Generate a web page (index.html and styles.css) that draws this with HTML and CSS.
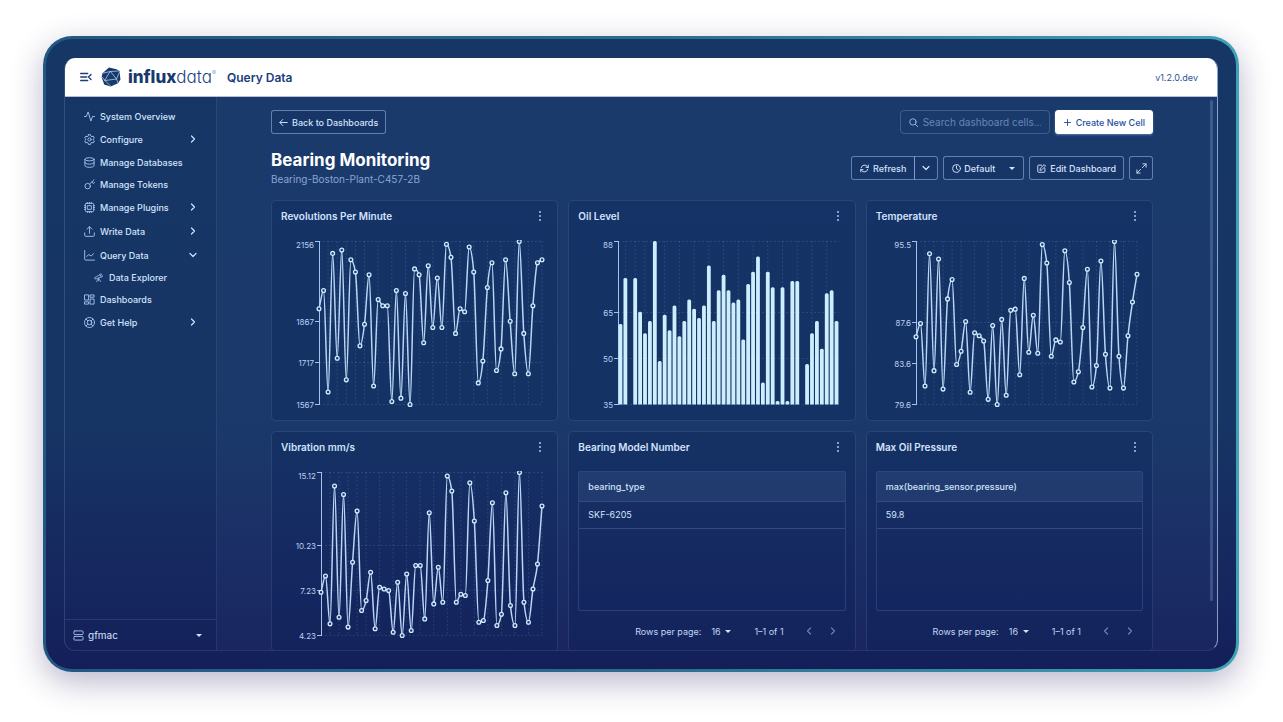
FILE: index.html
```html
<!DOCTYPE html>
<html lang="en">
<head>
    <meta charset="UTF-8">
    <meta name="viewport" content="width=device-width, initial-scale=1.0">
    <title>Query Data</title>
    <link rel="stylesheet" href="styles.css">
</head>
<body>
    <div class="frame">
        <div class="app">
            <header class="topbar">
                <button class="icon-btn menu-btn" type="button" aria-label="Collapse menu">
                    <svg width="12" height="10" viewBox="0 0 12 10"><path d="M.7 1.500h7M.7 5h6M.7 8.500h7M11 2.500 8.500 5 11 7.500"/></svg>
                </button>
                <a class="logo" href="#">
                    <svg class="logo-mark" width="20" height="20" viewBox="0 0 20 20">
                        <path class="logo-shape" d="M8 .6 15.5 2.2 18.6 4 19.4 12.5 17 16.3 9.6 19.4 3.2 17.6 .7 10.6 1.4 6.2z"/>
                        <path class="logo-lines" d="M9.500 4.500 15.5 12 4 13.500zM9.500 4.500 1.4 6.2M9.500 4.500 17.500 4M15.500 12 18.6 5M15.5 12 17 16M4 13.500 9.6 19M4 13.500 1 10"/>
                    </svg>
                    <span class="logo-text"><b>influx</b>data<sup>®</sup></span>
                </a>
                <h2 class="page-name">Query Data</h2>
                <span class="version">v1.2.0.dev</span>
            </header>

            <div class="layout">
                <aside class="sidebar">
                    <nav class="nav">
                        <a class="nav-item" href="#">
                            <svg class="icon" viewBox="0 0 24 24"><path d="M1 12h4l4-10 6 20 3.500-10H23"/></svg>
                            System Overview
                        </a>
                        <a class="nav-item expandable" href="#">
                            <svg class="icon" viewBox="0 0 24 24"><path d="M9.700 1.500h4.600l.8 3.200 2 1.200 3.200-1 2.300 4-2.400 2.200v2l2.400 2.200-2.300 4-3.200-1-2 1.200-.8 3.200H9.700l-.8-3.200-2-1.200-3.200 1-2.300-4 2.400-2.200v-2L1.400 8.900l2.300-4 3.200 1 2-1.200z"/><circle cx="12" cy="12" r="3.500"/></svg>
                            Configure
                            <svg class="chevron" viewBox="0 0 8 8"><path d="m2.500 1 3 3-3 3"/></svg>
                        </a>
                        <a class="nav-item" href="#">
                            <svg class="icon" viewBox="0 0 24 24"><ellipse cx="12" cy="5" rx="10" ry="3.500"/><path d="M2 5v14c0 2 4.500 3.500 10 3.500S22 21 22 19V5M2 12c0 2 4.500 3.500 10 3.500S22 14 22 12"/></svg>
                            Manage Databases
                        </a>
                        <a class="nav-item" href="#">
                            <svg class="icon" viewBox="0 0 24 24"><circle cx="8" cy="15.500" r="6"/><path d="M12.500 11 22 1.500M17 6.500l3.500 3.500L23 7"/></svg>
                            Manage Tokens
                        </a>
                        <a class="nav-item expandable" href="#">
                            <svg class="icon" viewBox="0 0 24 24"><rect x="3" y="3" width="18" height="18" rx="2"/><rect x="8" y="8" width="8" height="8"/><path d="M8 3V1M12 3V1M16 3V1M8 23v-2M12 23v-2M16 23v-2M3 8H1M3 12H1M3 16H1M23 8h-2M23 12h-2M23 16h-2"/></svg>
                            Manage Plugins
                            <svg class="chevron" viewBox="0 0 8 8"><path d="m2.500 1 3 3-3 3"/></svg>
                        </a>
                        <a class="nav-item expandable" href="#">
                            <svg class="icon" viewBox="0 0 24 24"><path d="M1.500 15v5.500a2 2 0 0 0 2 2h17a2 2 0 0 0 2-2V15M12 16V2M6.500 7 12 1.500 17.500 7"/></svg>
                            Write Data
                            <svg class="chevron" viewBox="0 0 8 8"><path d="m2.500 1 3 3-3 3"/></svg>
                        </a>
                        <a class="nav-item expandable" href="#">
                            <svg class="icon" viewBox="0 0 24 24"><path d="M1.500 1v19a2 2 0 0 0 2 2H23M6 14l4.500-4 5 3L21 8"/></svg>
                            Query Data
                            <svg class="chevron" viewBox="0 0 8 8"><path d="m1 2.500 3 3 3-3"/></svg>
                        </a>
                        <a class="nav-item sub-item" href="#">
                            <svg class="icon icon-sm" viewBox="0 0 24 24"><path d="m2 12 14-7 3 6-15 5zM15 4l4-2 4 7-4 2M12 14l-5 9M12 14l6 9M12 14v7"/></svg>
                            Data Explorer
                        </a>
                        <a class="nav-item" href="#">
                            <svg class="icon" viewBox="0 0 24 24"><path d="M2 2h8v11H2zM14 2h8v5h-8zM14 11h8v11h-8zM2 17h8v5H2z"/></svg>
                            Dashboards
                        </a>
                        <a class="nav-item expandable" href="#">
                            <svg class="icon" viewBox="0 0 24 24"><circle cx="12" cy="12" r="11"/><circle cx="12" cy="12" r="5"/><path d="m4.500 4.500 4 4M15.500 8.500l4-4M15.500 15.500l4 4M8.500 15.500l-4 4"/></svg>
                            Get Help
                            <svg class="chevron" viewBox="0 0 8 8"><path d="m2.500 1 3 3-3 3"/></svg>
                        </a>
                    </nav>
                    <div class="server">
                        <svg class="icon" viewBox="0 0 24 24"><rect x="2" y="2" width="20" height="8" rx="2"/><rect x="2" y="14" width="20" height="8" rx="2"/></svg>
                        <div class="select-wrap">
                            <select class="server-select" aria-label="Server">
                                <option>gfmac</option>
                            </select>
                            <svg class="caret" viewBox="0 0 6 3"><path d="M0 0h6L3 3z"/></svg>
                        </div>
                    </div>
                </aside>

                <main class="content">
                    <div class="actions">
                        <button class="btn" type="button">
                            <svg class="btn-icon" viewBox="0 0 24 24"><path d="M22 12H3M10 4l-8 8 8 8"/></svg>
                            Back to Dashboards
                        </button>
                        <div class="actions-right">
                            <label class="search">
                                <svg class="btn-icon" viewBox="0 0 24 24"><circle cx="10.500" cy="10.500" r="8.500"/><path d="m17 17 6 6"/></svg>
                                <input type="text" placeholder="Search dashboard cells..." aria-label="Search dashboard cells">
                            </label>
                            <button class="btn btn-primary" type="button">
                                <svg class="btn-icon" viewBox="0 0 24 24"><path d="M12 4v16M4 12h16"/></svg>
                                Create New Cell
                            </button>
                        </div>
                    </div>

                    <div class="heading">
                        <div>
                            <h1>Bearing Monitoring</h1>
                            <p class="subtitle">Bearing-Boston-Plant-C457-2B</p>
                        </div>
                        <div class="toolbar">
                            <div class="btn-group">
                                <button class="btn" type="button">
                                    <svg class="btn-icon" viewBox="0 0 24 24"><path d="M3 10a9.500 9.500 0 0 1 17-3l2 2M22 3v6h-6M21 14a9.500 9.500 0 0 1-17 3l-2-2M2 21v-6h6"/></svg>
                                    Refresh
                                </button>
                                <button class="btn btn-square" type="button" aria-label="Refresh options">
                                    <svg class="chevron" viewBox="0 0 8 8"><path d="m1 2.500 3 3 3-3"/></svg>
                                </button>
                            </div>
                            <div class="btn time-range">
                                <svg class="btn-icon" viewBox="0 0 24 24"><circle cx="12" cy="12" r="10.500"/><path d="M12 5v7.500l4.500 3"/></svg>
                                <div class="select-wrap">
                                    <select aria-label="Time range">
                                        <option>Default</option>
                                    </select>
                                    <svg class="caret" viewBox="0 0 6 3"><path d="M0 0h6L3 3z"/></svg>
                                </div>
                            </div>
                            <button class="btn" type="button">
                                <svg class="btn-icon" viewBox="0 0 24 24"><path d="M12 3H4a2 2 0 0 0-2 2v15a2 2 0 0 0 2 2h15a2 2 0 0 0 2-2v-8M8 16l1-5 10-9.500 4 4L13 15z"/></svg>
                                Edit Dashboard
                            </button>
                            <button class="btn btn-square btn-expand" type="button" aria-label="Full screen">
                                <svg class="btn-icon" viewBox="0 0 24 24"><path d="M15 2h7v7M22 2l-8 8M9 22H2v-7M2 22l8-8"/></svg>
                            </button>
                        </div>
                    </div>

                    <div class="cells">
                        <section class="cell">
                            <div class="cell-head">
                                <h3>Revolutions Per Minute</h3>
                                <button class="icon-btn dots" type="button" aria-label="Cell menu"><i></i><i></i><i></i></button>
                            </div>
                            <svg class="chart" data-chart="rpm"></svg>
                        </section>
                        <section class="cell">
                            <div class="cell-head">
                                <h3>Oil Level</h3>
                                <button class="icon-btn dots" type="button" aria-label="Cell menu"><i></i><i></i><i></i></button>
                            </div>
                            <svg class="chart" data-chart="oil"></svg>
                        </section>
                        <section class="cell">
                            <div class="cell-head">
                                <h3>Temperature</h3>
                                <button class="icon-btn dots" type="button" aria-label="Cell menu"><i></i><i></i><i></i></button>
                            </div>
                            <svg class="chart" data-chart="temperature"></svg>
                        </section>
                        <section class="cell">
                            <div class="cell-head">
                                <h3>Vibration mm/s</h3>
                                <button class="icon-btn dots" type="button" aria-label="Cell menu"><i></i><i></i><i></i></button>
                            </div>
                            <svg class="chart" data-chart="vibration"></svg>
                        </section>
                        <section class="cell">
                            <div class="cell-head">
                                <h3>Bearing Model Number</h3>
                                <button class="icon-btn dots" type="button" aria-label="Cell menu"><i></i><i></i><i></i></button>
                            </div>
                            <div class="table-box">
                                <table>
                                    <thead><tr><th>bearing_type</th></tr></thead>
                                    <tbody><tr><td>SKF-6205</td></tr></tbody>
                                </table>
                            </div>
                            <div class="pager">
                                <label for="rows1">Rows per page:</label>
                                <div class="select-wrap rows">
                                    <select id="rows1"><option>16</option></select>
                                    <svg class="caret" viewBox="0 0 6 3"><path d="M0 0h6L3 3z"/></svg>
                                </div>
                                <span class="range">1–1 of 1</span>
                                <button class="icon-btn" type="button" disabled aria-label="Previous page"><svg class="chevron" viewBox="0 0 8 8"><path d="m5.500 1-3 3 3 3"/></svg></button>
                                <button class="icon-btn" type="button" disabled aria-label="Next page"><svg class="chevron" viewBox="0 0 8 8"><path d="m2.500 1 3 3-3 3"/></svg></button>
                            </div>
                        </section>
                        <section class="cell">
                            <div class="cell-head">
                                <h3>Max Oil Pressure</h3>
                                <button class="icon-btn dots" type="button" aria-label="Cell menu"><i></i><i></i><i></i></button>
                            </div>
                            <div class="table-box">
                                <table>
                                    <thead><tr><th>max(bearing_sensor.pressure)</th></tr></thead>
                                    <tbody><tr><td>59.8</td></tr></tbody>
                                </table>
                            </div>
                            <div class="pager">
                                <label for="rows2">Rows per page:</label>
                                <div class="select-wrap rows">
                                    <select id="rows2"><option>16</option></select>
                                    <svg class="caret" viewBox="0 0 6 3"><path d="M0 0h6L3 3z"/></svg>
                                </div>
                                <span class="range">1–1 of 1</span>
                                <button class="icon-btn" type="button" disabled aria-label="Previous page"><svg class="chevron" viewBox="0 0 8 8"><path d="m5.500 1-3 3 3 3"/></svg></button>
                                <button class="icon-btn" type="button" disabled aria-label="Next page"><svg class="chevron" viewBox="0 0 8 8"><path d="m2.500 1 3 3-3 3"/></svg></button>
                            </div>
                        </section>
                    </div>
                    <div class="scroll-thumb"></div>
                </main>
            </div>
        </div>
    </div>

    <script src="charts.js"></script>
</body>
</html>
```

FILE: styles.css
```css
* {
    box-sizing: border-box;
}

body {
    display: flex;
    height: 100vh;
    margin: 0;
    padding: 36px 44px 50px 43px;
    overflow: hidden;
    background: #fff;
    color: #d3e3fc;
    font-family: Inter, "Liberation Sans", sans-serif;
    font-size: 9px;
    font-weight: 500;
}

h1, h2, h3, p {
    margin: 0;
}

a {
    color: inherit;
    text-decoration: none;
}

button, select, input {
    font: inherit;
    color: inherit;
}

svg {
    flex: none;
    fill: none;
    stroke: currentColor;
    stroke-linecap: round;
    stroke-linejoin: round;
}

.frame {
    display: flex;
    flex: 1;
    padding: 19px 18px 18px;
    border: 3px solid transparent;
    border-radius: 29px;
    background:
        linear-gradient(180deg, #163666 0%, #163565 60%, #16285f 84%, #141f59 100%) padding-box,
        linear-gradient(90deg, #235783 0%, #2b6c8e 50%, #40a2b5 100%) border-box;
    box-shadow: 0 10px 32px rgba(38, 28, 92, 0.32);
}

.app {
    display: flex;
    flex: 1;
    flex-direction: column;
    min-width: 0;
    overflow: hidden;
    border: 1px solid rgba(150, 180, 230, 0.16);
    border-top: 0;
    border-left-color: rgba(150, 180, 230, 0.2);
    border-right-color: rgba(190, 210, 245, 0.7);
    border-radius: 11px;
}

.topbar {
    display: flex;
    align-items: center;
    height: 39px;
    flex: none;
    padding: 0 19px 0 15px;
    border-bottom: 1px solid #b5c0d3;
    background: #fff;
    color: #1b3d7c;
}

.icon-btn {
    display: flex;
    align-items: center;
    justify-content: center;
    padding: 0;
    border: 0;
    background: none;
}

.menu-btn {
    stroke-width: 1.4;
    margin-right: 9px;
}

.logo {
    display: flex;
    align-items: center;
    gap: 7px;
    margin-right: 11px;
}

.logo-shape {
    fill: #173a6c;
    stroke: none;
}

.logo-lines {
    stroke: #b4cbe8;
    stroke-width: 0.8;
}

.logo-text {
    color: #1c4480;
    font-size: 17px;
    font-weight: 300;
    line-height: 20px;
    font-feature-settings: "cv11";
}

.logo-text b {
    color: #173a6c;
    font-weight: 800;
}

.logo-text sup {
    color: #4f86c8;
    font-size: 6px;
    line-height: 0;
    vertical-align: 8px;
}

.page-name {
    font-size: 12px;
    font-weight: 600;
}

.version {
    margin-left: auto;
    color: #2a5298;
    font-size: 9px;
    font-weight: 400;
}

.layout {
    display: flex;
    flex: 1;
    min-height: 0;
}

.sidebar {
    display: flex;
    flex-direction: column;
    width: 152px;
    flex: none;
    border-right: 1px solid rgba(150, 180, 230, 0.14);
}

.nav {
    flex: 1;
    padding: 8px 19px 0 19px;
}

.nav-item {
    display: flex;
    align-items: center;
    gap: 5px;
    height: 22px;
}

.nav-item.expandable {
    height: 24px;
}

.nav-item.sub-item {
    height: 21px;
    padding-left: 10px;
    gap: 6px;
}

.icon {
    width: 11px;
    height: 11px;
    color: #a9c4f0;
    stroke-width: 2;
}

.icon-sm {
    width: 9px;
    height: 9px;
}

.chevron {
    width: 8px;
    height: 8px;
    stroke-width: 1.2;
}

.nav-item .chevron {
    margin-left: auto;
}

.server {
    display: flex;
    align-items: center;
    gap: 4px;
    height: 31px;
    padding: 0 14px 0 8px;
    border-top: 1px solid rgba(150, 180, 230, 0.16);
    font-size: 10px;
    font-weight: 400;
}

.select-wrap {
    position: relative;
    flex: 1;
}

.select-wrap select {
    display: block;
    width: 100%;
    padding: 0;
    border: 0;
    outline: 0;
    appearance: none;
    background: none;
}

.caret {
    position: absolute;
    top: 50%;
    right: 0;
    width: 6px;
    height: 3px;
    margin-top: -1px;
    fill: #d3e3fc;
    stroke: none;
    pointer-events: none;
}

.content {
    position: relative;
    flex: 1;
    min-width: 0;
    overflow: hidden;
    padding: 13px 64px 0 54px;
    background: rgba(160, 190, 255, 0.04);
}

.actions, .heading, .actions-right, .toolbar, .btn-group {
    display: flex;
}

.actions, .heading {
    justify-content: space-between;
}

.actions-right, .toolbar {
    gap: 5px;
}

.btn {
    display: flex;
    align-items: center;
    gap: 4px;
    height: 24px;
    padding: 0 7px;
    border: 1px solid rgba(160, 190, 240, 0.55);
    border-radius: 3px;
    background: rgba(0, 30, 80, 0.14);
    white-space: nowrap;
}

.btn-icon {
    width: 9px;
    height: 9px;
    stroke-width: 2.5;
}

.btn-primary {
    border-color: #fff;
    background: #fff;
    color: #2450a0;
    box-shadow: 0 1px 2px rgba(150, 190, 255, 0.5);
}

.btn-group .btn:first-child {
    border-radius: 3px 0 0 3px;
}

.btn-group .btn:last-child {
    margin-left: -1px;
    border-radius: 0 3px 3px 0;
}

.btn-square {
    justify-content: center;
    width: 24px;
    padding: 0;
}

.btn-group .btn:first-child {
    padding: 0 8px;
}

.btn-expand .btn-icon {
    width: 11px;
    height: 11px;
    stroke-width: 2;
}

.time-range {
    width: 81px;
    gap: 3px;
    padding: 0 8px;
}

.search {
    display: flex;
    align-items: center;
    gap: 5px;
    width: 150px;
    height: 24px;
    padding: 0 8px;
    border: 1px solid rgba(150, 180, 230, 0.3);
    border-radius: 4px;
    color: #9db7e2;
}

.search input {
    width: 100%;
    min-width: 0;
    padding: 0;
    border: 0;
    outline: 0;
    background: none;
    font-size: 10px;
    font-weight: 400;
}

.search input::placeholder {
    color: #6685b8;
}

.heading {
    align-items: center;
    margin: 15px 0 13px;
}

h1 {
    color: #fff;
    font-size: 17px;
    font-weight: 700;
    line-height: 22px;
}

.subtitle {
    color: #8aa5d3;
    font-size: 10px;
    font-weight: 400;
    line-height: 16px;
}

.cells {
    display: grid;
    grid-template-columns: repeat(3, minmax(0, 1fr));
    gap: 10px;
}

.cell {
    display: flex;
    flex-direction: column;
    height: 221px;
    padding: 0 9px;
    border: 1px solid rgba(150, 180, 230, 0.15);
    border-radius: 5px;
    background: rgba(0, 25, 80, 0.2);
}

.cell-head {
    display: flex;
    align-items: center;
    justify-content: space-between;
    height: 29px;
    flex: none;
    margin-bottom: 10px;
}

h3 {
    font-size: 10px;
    font-weight: 600;
}

.dots {
    flex-direction: column;
    gap: 2px;
    width: 16px;
    height: 16px;
}

.dots i {
    width: 2px;
    height: 2px;
    border-radius: 50%;
    background: #a9c4f0;
}

.chart {
    width: 100%;
    height: 178px;
}

.chart .grid {
    stroke: rgba(150, 180, 230, 0.17);
    stroke-dasharray: 2 2;
    stroke-linecap: butt;
}

.chart .axis {
    stroke: #a3c2ef;
    stroke-linecap: butt;
}

.chart text {
    fill: #b9d0f3;
    stroke: none;
    font-size: 8px;
    font-weight: 400;
    text-anchor: end;
}

.chart .line {
    stroke: #b9d6f6;
    stroke-width: 1.5;
}

.chart circle {
    fill: #1b3c70;
    stroke: #d2ecff;
    stroke-width: 1.3;
}

.chart .bar {
    fill: #cdeeff;
    stroke: none;
}

.table-box {
    flex: 1;
    border: 1px solid rgba(150, 180, 230, 0.18);
    border-radius: 2px;
}

table {
    width: 100%;
    border-collapse: collapse;
}

th, td {
    height: 27px;
    padding: 0 9px;
    border-bottom: 1px solid rgba(150, 180, 230, 0.22);
    text-align: left;
    font-weight: 400;
}

th {
    height: 29px;
    background: rgba(150, 180, 230, 0.1);
    font-weight: 500;
}

.pager {
    display: flex;
    align-items: center;
    justify-content: flex-end;
    height: 40px;
    flex: none;
    padding-right: 1px;
    color: #c3d4f5;
    font-weight: 400;
}

.rows {
    flex: none;
    width: 20px;
    margin: 0 23px 0 10px;
}

.range {
    margin-right: 13px;
}

.pager .icon-btn {
    width: 24px;
    height: 24px;
    color: #6a80b4;
}

.scroll-thumb {
    position: absolute;
    top: 3px;
    right: 4px;
    bottom: 49px;
    width: 3px;
    border-radius: 2px;
    background: rgba(140, 170, 225, 0.3);
}
```

FILE: charts.js
```javascript
const charts = {
    rpm: {
        type: 'line', left: 38, ticks: [2156, 1867, 1717, 1567],
        data: [1913, 1979, 1612, 2113, 1734, 2125, 1656, 2090, 2046, 1779, 1857, 2036, 1634, 1946, 1924, 1924, 1578,
            1979, 1590, 1968, 1567, 2057, 2036, 1790, 2068, 1845, 2024, 1845, 2146, 2099, 1824, 1913, 1902, 2136, 2046,
            1645, 1724, 1990, 2079, 1690, 1768, 2090, 1868, 1678, 2156, 1824, 1678, 1924, 2079, 2090]
    },
    oil: {
        type: 'bar', left: 40, ticks: [88, 65, 50, 35],
        data: [61, 76, 35, 76, 65, 58, 62, 88, 49, 64, 59, 67, 57, 62, 69, 66, 63, 67, 80, 62, 72, 77, 72, 68, 69, 56,
            74, 78, 83, 42, 78, 73, 36, 73, 36, 75, 75, 35, 48, 58, 62, 53, 71, 72, 62]
    },
    temperature: {
        type: 'line', left: 40, ticks: [95.5, 87.6, 83.6, 79.6],
        data: [86.2, 87.5, 81.4, 94.3, 82.9, 93.8, 81.1, 89.9, 91.8, 83.5, 84.8, 87.7, 80.8, 86.6, 86.3, 85.8, 80.1,
            87.3, 79.6, 87.9, 80.5, 88.8, 88.9, 82.5, 91.9, 84.7, 88.3, 84.6, 95.2, 93.4, 84.3, 85.9, 85.7, 94.6, 91.5,
            81.8, 82.8, 87.1, 92.8, 81.3, 83.4, 93.6, 84.5, 81.2, 95.5, 84.3, 81.2, 86.3, 89.6, 92.3]
    },
    vibration: {
        type: 'line', left: 40, ticks: [15.12, 10.23, 7.23, 4.23],
        data: [7.12, 8.21, 5.01, 14.21, 5.45, 13.65, 4.79, 9.12, 12.54, 5.9, 6.56, 8.45, 4.68, 7.45, 7.34, 7.23, 4.45,
            7.79, 4.23, 8.34, 4.56, 8.9, 8.9, 5.34, 12.43, 6.34, 8.79, 6.45, 14.88, 13.88, 6.45, 6.99, 6.9, 14.43,
            11.88, 5.12, 5.23, 7.9, 13.1, 4.9, 5.65, 13.76, 6.23, 4.9, 15.12, 6.45, 5.12, 7.34, 9.01, 12.88]
    }
};

const TOP = 1;
const BOTTOM = 164;

// smooth path that never overshoots the points
function monotonePath(pts) {
    const n = pts.length;
    const slope = [];
    for (let i = 0; i < n - 1; i++) {
        slope.push((pts[i + 1][1] - pts[i][1]) / (pts[i + 1][0] - pts[i][0]));
    }
    const tan = pts.map((p, i) => {
        if (i === 0) return slope[0];
        if (i === n - 1) return slope[n - 2];
        const a = slope[i - 1], b = slope[i];
        if (a * b <= 0) return 0;
        return Math.sign(a) * Math.min(Math.abs(a), Math.abs(b), Math.abs(a + b) / 4) * 2;
    });
    let d = `M${pts[0][0]},${pts[0][1]}`;
    for (let i = 0; i < n - 1; i++) {
        const [x0, y0] = pts[i], [x1, y1] = pts[i + 1];
        const dx = (x1 - x0) / 3;
        d += `C${x0 + dx},${y0 + dx * tan[i]} ${x1 - dx},${y1 - dx * tan[i + 1]} ${x1},${y1}`;
    }
    return d;
}

function drawChart(svg) {
    const { type, left, ticks, data } = charts[svg.dataset.chart];
    const right = svg.clientWidth - 6;
    const max = ticks[0], min = ticks[ticks.length - 1];
    const y = v => TOP + (max - v) / (max - min) * (BOTTOM - TOP);
    const band = (right - left) / data.length;
    const x = i => type === 'bar' ? left + band * (i + 0.5) : left + (right - left) * i / (data.length - 1);
    let out = '';

    // grid
    ticks.forEach(t => {
        out += `<path class="grid" d="M${left} ${Math.round(y(t)) + 0.5}H${right}"/>`;
    });
    const first = type === 'bar' ? 1 : 2;
    for (let i = first; i < data.length; i += i < first + 8 ? 2 : 3) {
        out += `<path class="grid" d="M${x(i)} ${TOP}V${BOTTOM}"/>`;
    }

    // y axis
    out += `<path class="axis" d="M${left + 0.5} ${TOP}V${BOTTOM + 1}"/>`;
    ticks.forEach((t, i) => {
        const ty = Math.round(y(t)) + 0.5;
        out += `<path class="axis" d="M${left - 4} ${ty}H${left}"/>`;
        out += `<text x="${left - 5}" y="${ty + (i === 0 ? 6 : 3)}">${t}</text>`;
    });

    if (type === 'bar') {
        data.forEach((v, i) => {
            if (v === min) return;
            const x0 = x(i) - 1.9;
            out += `<path class="bar" d="M${x0} ${BOTTOM + 0.5}V${y(v) + 1.5}q0-1.500 1.500-1.500h.8q1.500 0 1.500 1.500V${BOTTOM + 0.5}z"/>`;
        });
    } else {
        const pts = data.map((v, i) => [x(i), y(v) + 0.5]);
        out += `<path class="line" d="${monotonePath(pts)}"/>`;
        pts.forEach(p => {
            out += `<circle cx="${p[0]}" cy="${p[1]}" r="1.9"/>`;
        });
    }
    svg.innerHTML = out;
}

function drawAll() {
    document.querySelectorAll('.chart').forEach(drawChart);
}

drawAll();
window.addEventListener('resize', drawAll);
```
